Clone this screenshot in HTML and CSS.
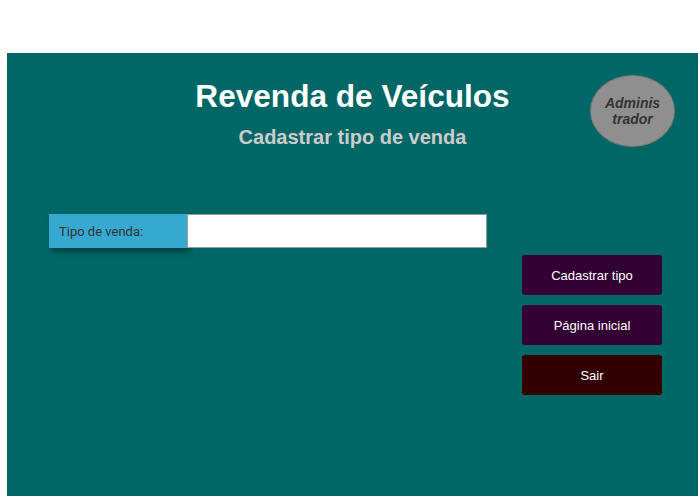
FILE: index.html
```html
<!DOCTYPE html>
<html lang="pt">
<head>
<meta charset="utf-8">
<link rel="stylesheet" href="styles.css">
</head>
<body>
<div class="panel">
  <header class="head">
    <h1 class="title">Revenda de Veículos</h1>
    <h2 class="subtitle">Cadastrar tipo de venda</h2>
    <div class="badge">Adminis<br>trador</div>
  </header>
  <div class="content">
    <div class="field">
      <label class="label" for="tipo">Tipo de venda:</label>
      <input class="input" id="tipo" type="text">
    </div>
    <div class="actions">
      <button class="btn btn-purple">Cadastrar tipo</button>
      <button class="btn btn-purple">Página inicial</button>
      <button class="btn btn-red">Sair</button>
    </div>
  </div>
</div>
</body>
</html>
```

FILE: styles.css
```css
html, body {
  margin: 0;
  padding: 0;
  background: #ffffff;
  font-family: "Liberation Sans", Arial, sans-serif;
}
body {
  padding: 53px 0 0 7px;
  height: 496px;
  box-sizing: border-box;
  overflow: hidden;
}
.panel {
  background: #006666;
  height: 443px;
  box-sizing: border-box;
}
.head {
  position: relative;
  display: flex;
  flex-direction: column;
  align-items: center;
  padding-top: 25px;
}
.title {
  margin: 0;
  font-size: 31.6px;
  font-weight: bold;
  color: #ffffff;
  line-height: 36px;
}
.subtitle {
  margin: 11px 0 0 0;
  font-size: 20px;
  font-weight: bold;
  color: #cccccc;
  line-height: 24px;
}
.badge {
  position: absolute;
  left: 583px;
  top: 22px;
  width: 83px;
  height: 70px;
  border-radius: 50%;
  background: #8f8f8f;
  border: 1px solid #7a7a7a;
  display: flex;
  align-items: center;
  justify-content: center;
  text-align: center;
  font-style: italic;
  font-weight: bold;
  font-size: 14px;
  line-height: 16px;
  color: #333333;
}
.content {
  display: flex;
  justify-content: space-between;
  align-items: flex-start;
  padding: 65px 36px 0 42px;
}
.field {
  display: flex;
}
.label {
  width: 138px;
  height: 34px;
  box-sizing: border-box;
  background: #36a9d0;
  color: #333333;
  font-family: Roboto, "Liberation Sans", sans-serif;
  font-size: 13px;
  display: flex;
  align-items: center;
  padding-left: 10px;
  box-shadow: 3px 4px 5px rgba(0, 0, 0, 0.35);
}
.input {
  width: 300px;
  height: 34px;
  box-sizing: border-box;
  border: 1px solid #999999;
  background: #ffffff;
  margin: 0;
  padding: 0 6px;
  outline: none;
}
.actions {
  display: flex;
  flex-direction: column;
  gap: 10px;
  margin-top: 41px;
}
.btn {
  width: 140px;
  height: 40px;
  border: none;
  border-radius: 3px;
  color: #ffffff;
  font-family: "Liberation Sans", Arial, sans-serif;
  font-size: 13px;
  cursor: pointer;
}
.btn-purple {
  background: #330033;
}
.btn-red {
  background: #330000;
}
```
